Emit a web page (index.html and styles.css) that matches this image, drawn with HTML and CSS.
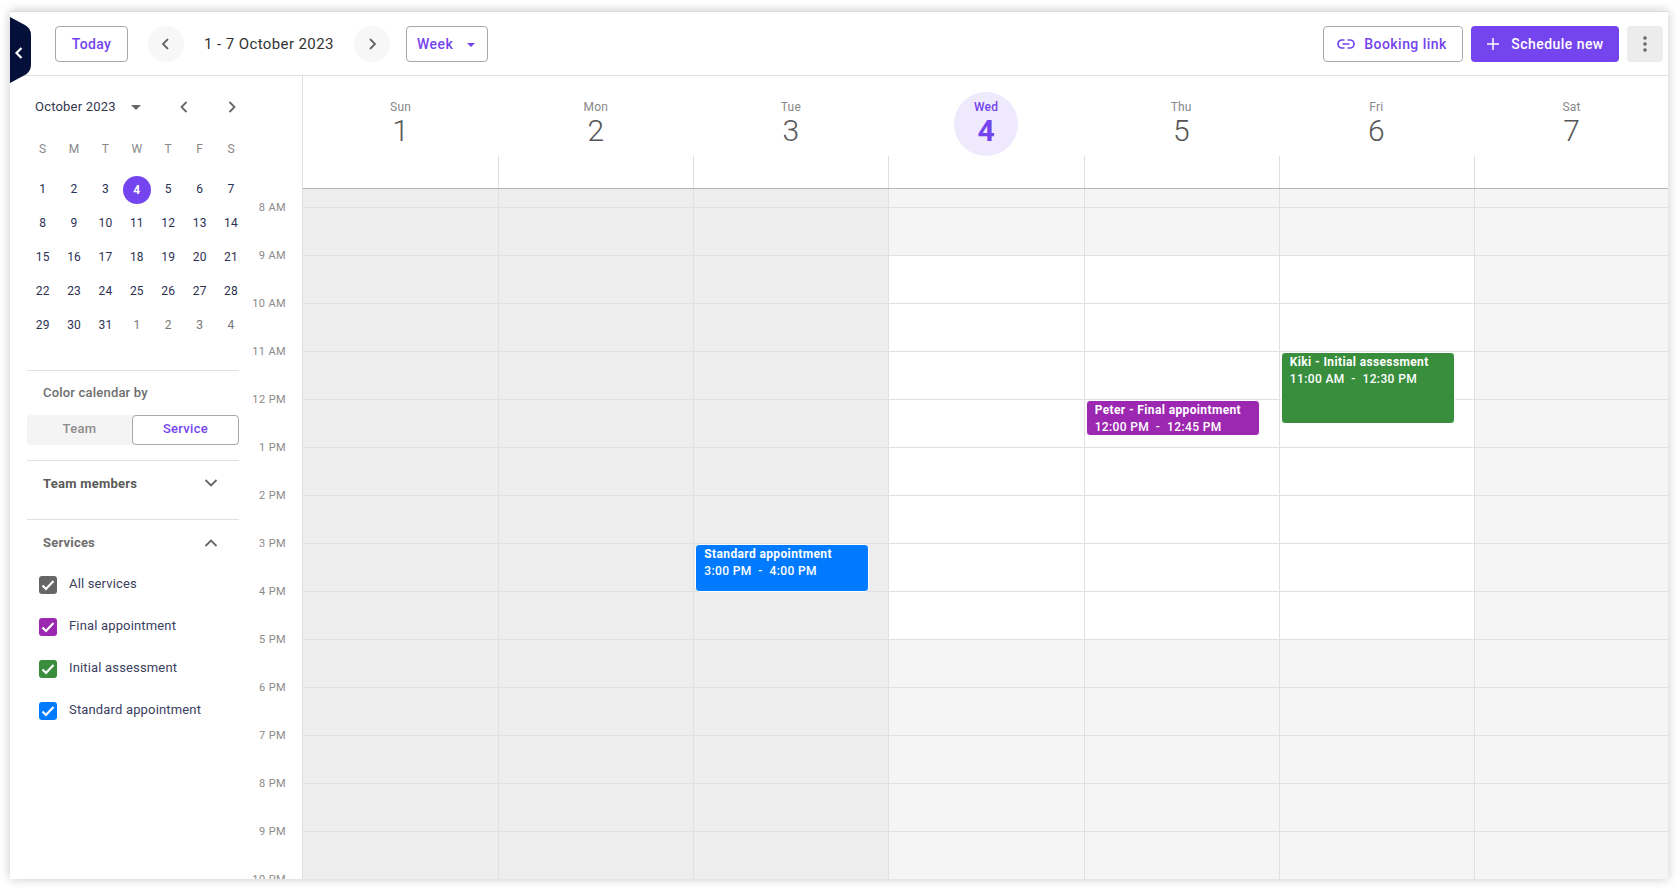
FILE: index.html
```html
<!DOCTYPE html>
<html lang="en">
<head>
<meta charset="utf-8">
<title>Calendar</title>
<link rel="stylesheet" href="styles.css">
</head>
<body>
<div class="card">
  <button class="collapse-tab" aria-label="Collapse">
    <svg viewBox="0 0 12 16" width="12" height="16"><path d="M8.500 3 3.500 8l5 5" fill="none" stroke="#fff" stroke-width="2.200"/></svg>
  </button>
  <header class="toolbar">
    <button class="btn btn-outline btn-today">Today</button>
    <button class="round-btn" aria-label="Previous"><svg viewBox="0 0 16 16" width="16" height="16"><path d="M10 3 5 8l5 5" class="chev"/></svg></button>
    <div class="range">1 - 7 October 2023</div>
    <button class="round-btn" aria-label="Next"><svg viewBox="0 0 16 16" width="16" height="16"><path d="m6 3 5 5-5 5" class="chev"/></svg></button>
    <button class="btn btn-outline btn-week">Week<span class="caret"></span></button>
    <div class="spacer"></div>
    <button class="btn btn-outline btn-link">
      <svg viewBox="0 0 18 10" width="18" height="10"><path d="M7.500 1H5a4 4 0 0 0 0 8h2.500M10.500 1H13a4 4 0 0 1 0 8h-2.500M5.500 5h7" fill="none" stroke="#7444ee" stroke-width="1.700"/></svg>
      Booking link
    </button>
    <button class="btn btn-primary">
      <svg viewBox="0 0 14 14" width="14" height="14"><path d="M7 1v12M1 7h12" fill="none" stroke="#fff" stroke-width="1.500"/></svg>
      Schedule new
    </button>
    <button class="btn-more" aria-label="More">
      <svg viewBox="0 0 4 18" width="4" height="18"><circle cx="2" cy="3" r="1.800"/><circle cx="2" cy="9" r="1.800"/><circle cx="2" cy="15" r="1.800"/></svg>
    </button>
  </header>
  <div class="main">
    <aside class="sidebar">
      <div class="panel">
        <div class="month-bar">
          <span class="month-name">October 2023</span>
          <span class="month-caret"></span>
          <svg class="month-prev" viewBox="0 0 12 14" width="12" height="14"><path d="M8.500 2 3.500 7l5 5" class="chev"/></svg>
          <svg class="month-next" viewBox="0 0 12 14" width="12" height="14"><path d="m3.500 2 5 5-5 5" class="chev"/></svg>
        </div>
        <div class="mini-cal">
          <span class="dow">S</span><span class="dow">M</span><span class="dow">T</span><span class="dow">W</span><span class="dow">T</span><span class="dow">F</span><span class="dow">S</span>
          <span>1</span><span>2</span><span>3</span><span class="today"><b>4</b></span><span>5</span><span>6</span><span>7</span>
          <span>8</span><span>9</span><span>10</span><span>11</span><span>12</span><span>13</span><span>14</span>
          <span>15</span><span>16</span><span>17</span><span>18</span><span>19</span><span>20</span><span>21</span>
          <span>22</span><span>23</span><span>24</span><span>25</span><span>26</span><span>27</span><span>28</span>
          <span>29</span><span>30</span><span>31</span><span class="other">1</span><span class="other">2</span><span class="other">3</span><span class="other">4</span>
        </div>
        <section class="color-by">
          <h3 class="color-title">Color calendar by</h3>
          <div class="toggle">
            <span class="toggle-off">Team</span>
            <span class="toggle-on">Service</span>
          </div>
        </section>
        <section class="accordion team">
          <h3>Team members</h3>
          <svg viewBox="0 0 14 10" width="14" height="10"><path d="m1.500 2 5.500 5.500L12.500 2" class="chev"/></svg>
        </section>
        <section class="services">
          <div class="accordion">
            <h3>Services</h3>
            <svg viewBox="0 0 14 10" width="14" height="10"><path d="M1.500 8 7 2.500 12.500 8" class="chev"/></svg>
          </div>
          <ul class="check-list">
            <li><span class="box c-all"><svg viewBox="0 0 18 18" width="18" height="18"><path d="m3.500 9.500 3.500 3.500L14.500 5" class="tick"/></svg></span>All services</li>
            <li><span class="box c-final"><svg viewBox="0 0 18 18" width="18" height="18"><path d="m3.500 9.500 3.500 3.500L14.500 5" class="tick"/></svg></span>Final appointment</li>
            <li><span class="box c-initial"><svg viewBox="0 0 18 18" width="18" height="18"><path d="m3.500 9.500 3.500 3.500L14.500 5" class="tick"/></svg></span>Initial assessment</li>
            <li><span class="box c-standard"><svg viewBox="0 0 18 18" width="18" height="18"><path d="m3.500 9.500 3.500 3.500L14.500 5" class="tick"/></svg></span>Standard appointment</li>
          </ul>
        </section>
      </div>
      <div class="gutter">
        <div>8 AM</div><div>9 AM</div><div>10 AM</div><div>11 AM</div><div>12 PM</div><div>1 PM</div><div>2 PM</div><div>3 PM</div><div>4 PM</div><div>5 PM</div><div>6 PM</div><div>7 PM</div><div>8 PM</div><div>9 PM</div><div>10 PM</div>
      </div>
    </aside>
    <div class="week">
      <div class="week-head">
        <div class="day-head"><div class="day-label"><span class="dname">Sun</span><span class="dnum">1</span></div><div class="stub"></div></div>
        <div class="day-head"><div class="day-label"><span class="dname">Mon</span><span class="dnum">2</span></div><div class="stub"></div></div>
        <div class="day-head"><div class="day-label"><span class="dname">Tue</span><span class="dnum">3</span></div><div class="stub"></div></div>
        <div class="day-head current"><div class="day-label"><span class="dname">Wed</span><span class="dnum">4</span></div><div class="stub"></div></div>
        <div class="day-head"><div class="day-label"><span class="dname">Thu</span><span class="dnum">5</span></div><div class="stub"></div></div>
        <div class="day-head"><div class="day-label"><span class="dname">Fri</span><span class="dnum">6</span></div><div class="stub"></div></div>
        <div class="day-head"><div class="day-label"><span class="dname">Sat</span><span class="dnum">7</span></div><div class="stub"></div></div>
      </div>
      <div class="week-grid">
        <div class="col past"><div class="slot first"></div><div class="slot"></div><div class="slot"></div><div class="slot"></div><div class="slot"></div><div class="slot"></div><div class="slot"></div><div class="slot"></div><div class="slot"></div><div class="slot"></div><div class="slot"></div><div class="slot"></div><div class="slot"></div><div class="slot"></div><div class="slot"></div></div>
        <div class="col past"><div class="slot first"></div><div class="slot"></div><div class="slot"></div><div class="slot"></div><div class="slot"></div><div class="slot"></div><div class="slot"></div><div class="slot"></div><div class="slot"></div><div class="slot"></div><div class="slot"></div><div class="slot"></div><div class="slot"></div><div class="slot"></div><div class="slot"></div></div>
        <div class="col past"><div class="slot first"></div><div class="slot"></div><div class="slot"></div><div class="slot"></div><div class="slot"></div><div class="slot"></div><div class="slot"></div><div class="slot"></div><div class="slot"></div><div class="slot"></div><div class="slot"></div><div class="slot"></div><div class="slot"></div><div class="slot"></div><div class="slot"></div>
          <div class="event ev-standard"><strong>Standard appointment</strong><span>3:00 PM&nbsp; - &nbsp;4:00 PM</span></div>
        </div>
        <div class="col work"><div class="slot first"></div><div class="slot"></div><div class="slot on"></div><div class="slot on"></div><div class="slot on"></div><div class="slot on"></div><div class="slot on"></div><div class="slot on"></div><div class="slot on"></div><div class="slot on"></div><div class="slot"></div><div class="slot"></div><div class="slot"></div><div class="slot"></div><div class="slot"></div></div>
        <div class="col work"><div class="slot first"></div><div class="slot"></div><div class="slot on"></div><div class="slot on"></div><div class="slot on"></div><div class="slot on"></div><div class="slot on"></div><div class="slot on"></div><div class="slot on"></div><div class="slot on"></div><div class="slot"></div><div class="slot"></div><div class="slot"></div><div class="slot"></div><div class="slot"></div>
          <div class="event ev-final"><strong>Peter - Final appointment</strong><span>12:00 PM&nbsp; - &nbsp;12:45 PM</span></div>
        </div>
        <div class="col work"><div class="slot first"></div><div class="slot"></div><div class="slot on"></div><div class="slot on"></div><div class="slot on"></div><div class="slot on"></div><div class="slot on"></div><div class="slot on"></div><div class="slot on"></div><div class="slot on"></div><div class="slot"></div><div class="slot"></div><div class="slot"></div><div class="slot"></div><div class="slot"></div>
          <div class="event ev-initial"><strong>Kiki - Initial assessment</strong><span>11:00 AM&nbsp; - &nbsp;12:30 PM</span></div>
        </div>
        <div class="col work"><div class="slot first"></div><div class="slot"></div><div class="slot"></div><div class="slot"></div><div class="slot"></div><div class="slot"></div><div class="slot"></div><div class="slot"></div><div class="slot"></div><div class="slot"></div><div class="slot"></div><div class="slot"></div><div class="slot"></div><div class="slot"></div><div class="slot"></div></div>
      </div>
    </div>
  </div>
</div>
</body>
</html>
```
FILE: styles.css
```css
* { box-sizing: border-box; }
html, body { height: 100%; }
body {
  margin: 0;
  padding: 11px 10px 10px;
  background: #fff;
  font-family: Roboto, "Liberation Sans", sans-serif;
  overflow: hidden;
}
button { font-family: inherit; cursor: pointer; padding: 0; }
h3 { margin: 0; font: inherit; }
ul { margin: 0; padding: 0; list-style: none; }

.card {
  position: relative;
  height: 868px;
  background: #fff;
  border-top: 1px solid #dcdcdc;
  box-shadow: 0 0 10px rgba(0,0,0,.22);
  display: flex;
  flex-direction: column;
  overflow: hidden;
}
.collapse-tab {
  position: absolute;
  left: 0;
  top: 5px;
  width: 21px;
  height: 66px;
  border: 0;
  background: #05103a;
  clip-path: path("M0 0 L14 7.500 Q21 11 21 18 L21 48 Q21 55 14 58.500 L0 66 Z");
  display: flex;
  align-items: center;
  justify-content: center;
  padding: 6px 3px 0 0;
}
.chev { fill: none; stroke: #666; stroke-width: 1.800; }

.toolbar {
  height: 64px;
  flex: none;
  border-bottom: 1px solid #e0e0e0;
  display: flex;
  align-items: center;
  padding: 1px 5px 0 45px;
}
.spacer { flex: 1; }
.btn {
  height: 36px;
  border-radius: 4px;
  font-size: 14px;
  font-weight: 500;
  letter-spacing: .35px;
  display: inline-flex;
  align-items: center;
  justify-content: center;
  white-space: nowrap;
}
.btn-outline { background: #fff; border: 1px solid #a8a8a8; color: #7444ee; }
.btn-today { width: 73px; margin-right: 20px; }
.round-btn {
  width: 36px;
  height: 36px;
  border-radius: 50%;
  border: 0;
  background: #f7f7f7;
  display: flex;
  align-items: center;
  justify-content: center;
}
.range {
  font-size: 15px;
  letter-spacing: .4px;
  color: #333;
  width: 170px;
  text-align: center;
}
.btn-week { width: 82px; margin-left: 16px; justify-content: flex-start; padding-left: 10px; letter-spacing: .45px; }
.caret {
  margin-left: 14px;
  margin-top: 2px;
  border-left: 4.500px solid transparent;
  border-right: 4.500px solid transparent;
  border-top: 4.500px solid #7444ee;
}
.btn-link { width: 140px; gap: 9px; margin-right: 8px; letter-spacing: .45px; padding-right: 2px; }
.btn-primary {
  width: 148px;
  background: #7444ee;
  border: 0;
  color: #fff;
  gap: 11px;
  margin-right: 8px;
  letter-spacing: .45px;
}
.btn-more {
  width: 36px;
  height: 36px;
  border: 0;
  border-radius: 4px;
  background: #ececec;
  display: flex;
  align-items: center;
  justify-content: center;
}
.btn-more svg { fill: #666; }

.main { flex: 1; min-height: 0; display: flex; }
.sidebar {
  width: 293px;
  flex: none;
  border-right: 1px solid #e0e0e0;
  display: flex;
  overflow: hidden;
}
.panel { width: 229px; flex: none; padding-left: 17px; }

.month-bar {
  height: 62px;
  display: flex;
  align-items: center;
  padding: 0 0 2px 8px;
  color: #2b3050;
}
.month-name { font-size: 13px; letter-spacing: .2px; color: #33384f; width: 96px; }
.month-caret {
  width: 0;
  border-left: 5px solid transparent;
  border-right: 5px solid transparent;
  border-top: 5px solid #666;
  margin-top: 2px;
}
.month-prev { margin: 2px 0 0 37px; }
.month-next { margin: 2px 0 0 36px; }

.mini-cal {
  width: 220px;
  display: grid;
  grid-template-columns: repeat(7, 31.400px);
  grid-auto-rows: 34px;
  font-size: 12px;
  color: #2c3154;
}
.mini-cal span {
  display: flex;
  align-items: center;
  justify-content: center;
  letter-spacing: .2px;
}
.mini-cal .dow { color: #888; height: 22px; }
.mini-cal .other { color: #777; }
.mini-cal .today b {
  width: 28px;
  height: 28px;
  margin-top: 2px;
  border-radius: 50%;
  background: #7444ee;
  color: #fff;
  font-weight: 700;
  display: flex;
  align-items: center;
  justify-content: center;
}

.color-by {
  width: 212px;
  margin-top: 28px;
  border-top: 1px solid #e0e0e0;
  height: 91px;
  border-bottom: 1px solid #e0e0e0;
  padding-top: 13px;
}
.color-title, .accordion h3 {
  font-size: 13px;
  font-weight: 500;
  letter-spacing: .2px;
  color: #6e6e6e;
  line-height: 18px;
  padding-left: 16px;
}
.toggle {
  display: flex;
  height: 30px;
  margin-top: 13px;
  background: #f4f4f4;
  border-radius: 4px;
  font-size: 13px;
  letter-spacing: .3px;
}
.toggle-off {
  width: 105px;
  display: flex;
  align-items: center;
  justify-content: center;
  padding-bottom: 3px;
  color: #8c8c8c;
  font-weight: 500;
}
.toggle-on {
  flex: 1;
  display: flex;
  align-items: center;
  justify-content: center;
  padding-bottom: 3px;
  background: #fff;
  border: 1px solid #a8a8a8;
  border-radius: 4px;
  color: #7444ee;
  font-weight: 500;
}
.accordion {
  width: 212px;
  display: flex;
  align-items: center;
  justify-content: space-between;
  padding-right: 21px;
}
.accordion.team {
  height: 59px;
  border-bottom: 1px solid #e0e0e0;
  padding-bottom: 12px;
}
.accordion.team svg { margin-bottom: 2px; }
.services .accordion { height: 45px; }
.accordion.team h3 { font-weight: 700; color: #5a5a5a; letter-spacing: .25px; }
.services .accordion h3 { font-weight: 700; }
.check-list { margin-top: 11px; padding-left: 12px; }
.check-list li {
  display: flex;
  align-items: flex-start;
  height: 42px;
  font-size: 13px;
  letter-spacing: .16px;
  color: #3a4060;
  line-height: 16px;
}
.box {
  width: 18px;
  height: 18px;
  border-radius: 3px;
  margin-right: 12px;
  flex: none;
  display: block;
}
.box svg { display: block; }
.tick { fill: none; stroke: #fff; stroke-width: 2.200; }
.c-all { background: #666; }
.c-final { background: #9c27b0; }
.c-initial { background: #388e3c; }
.c-standard { background: #007bff; }

.gutter {
  flex: 1;
  padding-top: 108px;
  font-size: 11px;
  letter-spacing: .4px;
  color: #8a8a8a;
  text-align: right;
  padding-right: 16px;
}
.gutter div { height: 48px; line-height: 48px; white-space: nowrap; }

.week { flex: 1; min-width: 0; display: flex; flex-direction: column; overflow: hidden; }
.week-head {
  display: grid;
  grid-template-columns: repeat(7, 195.170px);
  height: 113px;
  flex: none;
  border-bottom: 1px solid #b4b4b4;
}
.day-head { display: flex; flex-direction: column; }
.day-label {
  height: 80px;
  flex: none;
  display: flex;
  flex-direction: column;
  align-items: center;
  padding-top: 23px;
  position: relative;
  color: #666;
}
.dname { font-size: 12px; line-height: 16px; letter-spacing: .2px; color: #888; position: relative; }
.dnum { font-size: 30px; font-weight: 300; line-height: 31px; color: #555; position: relative; }
.stub { flex: 1; }
.day-head + .day-head .stub { border-left: 1px solid #e0e0e0; }
.current .day-label::before {
  content: "";
  position: absolute;
  left: 50%;
  top: 16px;
  width: 64px;
  height: 64px;
  margin-left: -32px;
  border-radius: 50%;
  background: #efe9fd;
}
.current .dname { color: #7444ee; font-weight: 500; }
.current .dnum { color: #7444ee; font-weight: 700; }

.week-grid {
  flex: 1;
  min-height: 0;
  display: grid;
  grid-template-columns: repeat(7, 195.170px);
  overflow: hidden;
}
.col { position: relative; min-width: 0; }
.col + .col { border-left: 1px solid #e0e0e0; }
.slot {
  height: 48px;
  border-bottom: 1px solid #e0e0e0;
  background: #f5f5f5;
}
.slot.first { height: 19px; }
.slot.on { background: #fff; }
.past .slot { background: #ededed; }
.event {
  position: absolute;
  left: 1px;
  width: 174px;
  border-radius: 4px;
  border: 1px solid #fff;
  color: #fff;
  padding: 1px 7px 0 8px;
  font-size: 12px;
  line-height: 17px;
  letter-spacing: .37px;
  display: flex;
  flex-direction: column;
  overflow: hidden;
}
.event strong { font-weight: 700; white-space: nowrap; }
.event span { font-weight: 500; white-space: nowrap; }
.ev-standard { background: #007bff; top: 355px; height: 48px; }
.ev-final { background: #9c27b0; top: 211px; height: 36px; }
.ev-initial { background: #388e3c; top: 163px; height: 72px; }
```
